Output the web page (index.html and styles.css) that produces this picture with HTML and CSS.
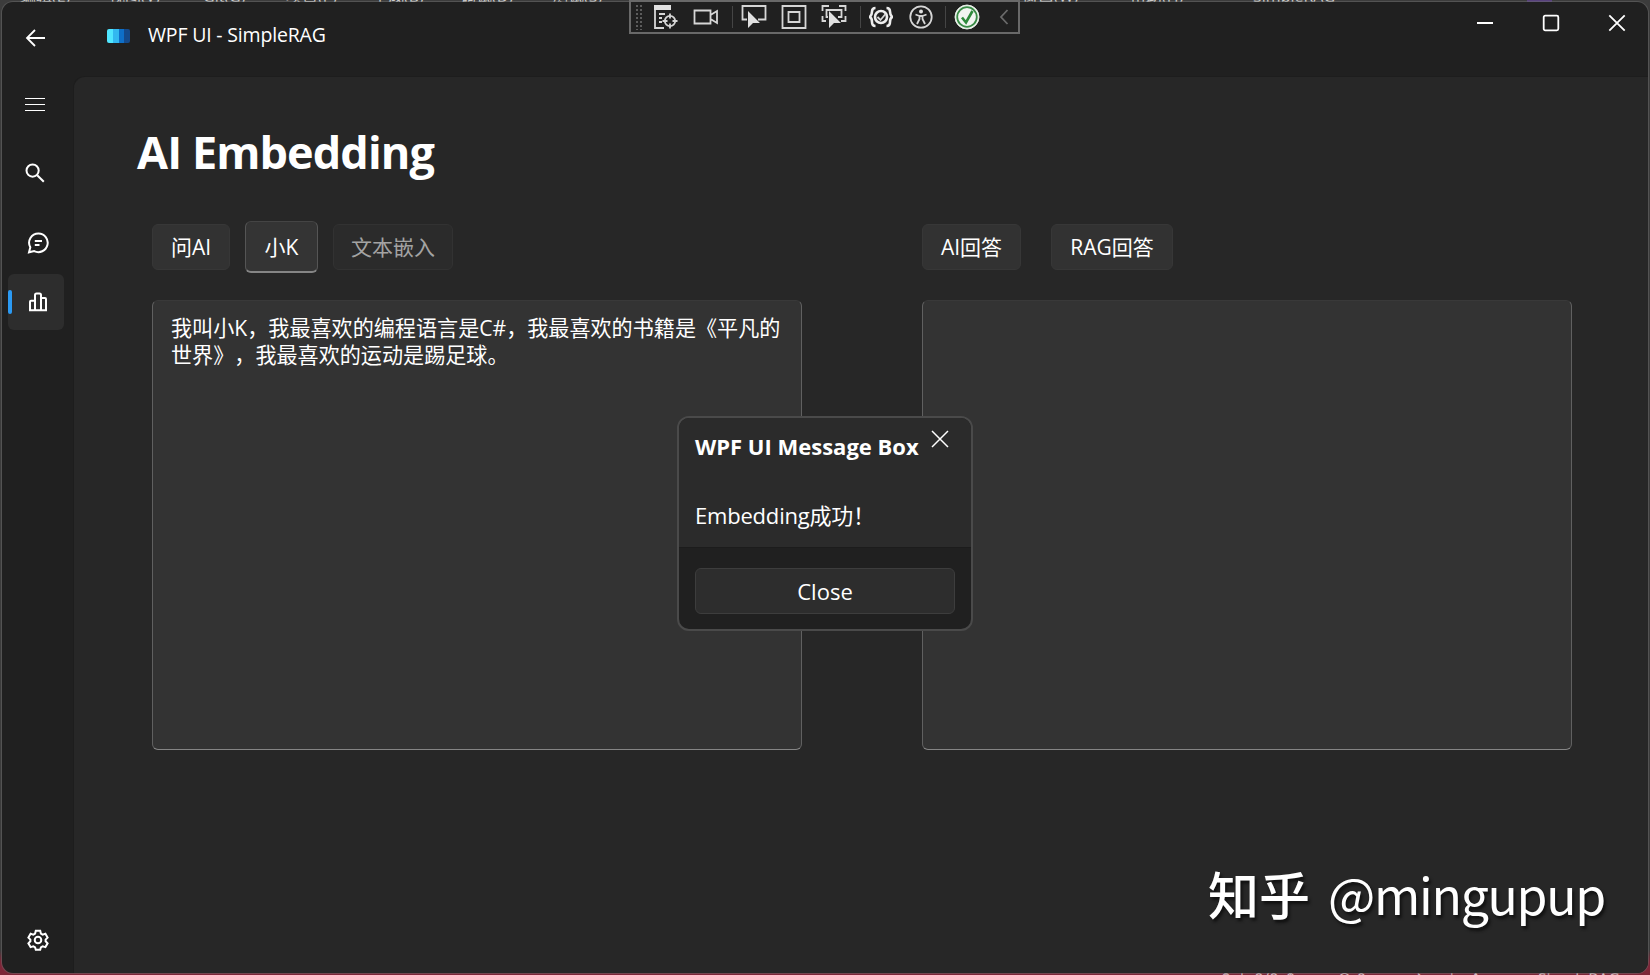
FILE: index.html
```html
<!DOCTYPE html>
<html lang="zh-CN">
<head>
  <meta charset="utf-8">
  <title>WPF UI - SimpleRAG</title>
  <link rel="stylesheet" href="styles.css">
</head>
<body>
  <!-- Menu bar of the window behind -->
  <div class="back-menu">
    <span class="m1">编辑(E)</span>
    <span class="m2">视图(V)</span>
    <span class="m3">Git(G)</span>
    <span class="m4">项目(P)</span>
    <span class="m5">生成(B)</span>
    <span class="m6">调试(D)</span>
    <span class="m7">测试(S)</span>
    <span class="m8">窗口(W)</span>
    <span class="m9">帮助(H)</span>
    <span class="m10">SimpleRAG</span>
    <i class="purple"></i>
  </div>
  <div class="back-status">
    <span>↑↓ 0/0 ↑</span><span>⊘ 0</span><span>⎇ main ▲</span><span>◈ SimpleRAG</span>
  </div>

  <div class="window">
    <header class="titlebar">
      <svg class="back" width="22" height="20" viewBox="0 0 22 20"><path d="M20 10H2M10 2L2 10l8 8"/></svg>
      <div class="app-icon"><i></i><i></i><i></i><i></i></div>
      <span class="app-title">WPF UI - SimpleRAG</span>
      <div class="window-buttons">
        <svg width="18" height="18" viewBox="0 0 18 18"><path d="M1 9h16"/></svg>
        <svg width="18" height="18" viewBox="0 0 18 18"><rect x="1.7" y="1.7" width="14.6" height="14.6" rx="1.5"/></svg>
        <svg width="18" height="18" viewBox="0 0 18 18"><path d="M1.3 1.3l15.4 15.4M16.7 1.3L1.3 16.7"/></svg>
      </div>
    </header>

    <div class="main">
      <nav class="sidebar">
        <div class="nav-menu"><svg width="20" height="16" viewBox="0 0 20 16"><path d="M0 2.500h20M0 8.500h20M0 14.500h20"/></svg></div>
        <div class="nav-search"><svg width="20" height="20" viewBox="0 0 20 20"><circle cx="7.600" cy="7.600" r="6.100"/><path d="M12.200 12.200l6.600 6.600"/></svg></div>
        <div class="nav-item chat"><svg width="22" height="22" viewBox="0 0 22 22"><path d="M11.500 1.500a9.300 9.300 0 1 1-4.300 17.600L2 20.300l1.300-5A9.300 9.300 0 0 1 11.500 1.500zM7.800 9h7.200M7.800 13h4.700"/></svg></div>
        <div class="nav-item active"><svg width="20" height="20" viewBox="0 0 20 20"><path d="M2 18.200V9.800q0-1 1-1h4V3q0-1.500 1.500-1.500h3Q13 1.500 13 3v15.200M13 6h4q1 0 1 1v11.200M7 8.800v9.400M1 18.200h18"/></svg></div>
        <div class="nav-item settings"><svg width="22" height="22" viewBox="0 0 22 22"><circle cx="11" cy="11" r="3.300"/><path d="M8.800 1.800h4.400l.7 2.800 1.700 1 2.800-.8 2.200 3.800-2 2v1.700l2 2-2.200 3.800-2.800-.8-1.700 1-.7 2.500H8.800l-.7-2.500-1.700-1-2.800.8-2.200-3.800 2-2v-1.700l-2-2 2.200-3.800 2.800.8 1.700-1z"/></svg></div>
      </nav>

      <div class="content">
        <h1>AI Embedding</h1>
        <div class="columns">
          <section class="column">
            <div class="toolbar">
              <button class="btn ask">问AI</button>
              <div class="input-k">小K</div>
              <button class="btn embed" disabled>文本嵌入</button>
            </div>
            <div class="textbox">我叫小K，我最喜欢的编程语言是C#，我最喜欢的书籍是《平凡的<br>世界》，我最喜欢的运动是踢足球。</div>
          </section>
          <section class="column">
            <div class="toolbar right">
              <button class="btn ai">AI回答</button>
              <button class="btn rag">RAG回答</button>
            </div>
            <div class="textbox"></div>
          </section>
        </div>
      </div>
    </div>
  </div>

  <!-- Debug toolbar -->
  <div class="debug-bar">
    <i class="grip"></i>
    <svg class="d1" width="24" height="26" viewBox="0 0 24 26"><path class="fill" d="M0 1h17v5H0z"/><path d="M1 6v18h9M5 10h6M5 14h3M5 18h3"/><circle cx="16" cy="17" r="5.200"/><path d="M16 9.500v5M16 19.500v5M8.500 17h5M18.500 17h5"/></svg>
    <svg class="d2" width="26" height="26" viewBox="0 0 26 26"><path d="M1.500 6.500h16v13h-16zM17.500 11l6.500-4v12l-6.500-4"/></svg>
    <i class="sep"></i>
    <svg class="d3" width="26" height="26" viewBox="0 0 26 26"><path d="M6 15.500H1.500V2h23v13.500H17"/><path class="fill" d="M7 7l12 12h-7l-5 5z"/></svg>
    <svg class="d4" width="26" height="26" viewBox="0 0 26 26"><path d="M1.500 2h23v22h-23zM7.500 8h11v10h-11z"/></svg>
    <svg class="d5" width="26" height="26" viewBox="0 0 26 26"><path d="M1.500 7V2H8M18 2h6.500v5M24.500 12v5H20M1.500 12v5H5M7 13H5.500V6h15v7H17"/><path class="fill" d="M8 7l12 12h-7l-5 5z"/></svg>
    <i class="sep"></i>
    <svg class="d6" width="24" height="26" viewBox="0 0 24 26"><path class="bold" d="M6.500 4Q3 4 3 7.500T.8 13Q3 14 3 18t3.500 4M17.500 4Q21 4 21 7.500t2.200 5.500Q21 14 21 18t-3.500 4"/><circle class="bold" cx="12" cy="13" r="6"/><path d="M8.500 13l3 3 5-6"/></svg>
    <svg class="d7" width="26" height="26" viewBox="0 0 26 26"><circle cx="13" cy="13" r="10.700"/><circle class="fill" cx="13" cy="7.500" r="2"/><path d="M7.500 10.500l4 1.500v3l-2.500 5M18.500 10.500l-4 1.500v3l2.500 5M11.500 12h3"/></svg>
    <i class="sep"></i>
    <svg class="d8" width="26" height="26" viewBox="0 0 26 26"><circle class="ok-outer" cx="13" cy="13" r="12"/><circle class="ok-ring" cx="13" cy="13" r="9.800"/><path class="ok-check" d="M8 13.500l4 5 6.500-11.500"/></svg>
    <svg class="d9" width="10" height="18" viewBox="0 0 10 18"><path d="M8.500 2L2 9l6.500 7"/></svg>
  </div>

  <!-- Message box -->
  <div class="message-box">
    <div class="message-body">
      <div class="message-head">
        <span class="message-title">WPF UI Message Box</span>
        <svg width="18" height="18" viewBox="0 0 18 18"><path d="M1 1l16 16M17 1L1 17"/></svg>
      </div>
      <p>Embedding成功！</p>
    </div>
    <div class="message-footer"><button>Close</button></div>
  </div>

  <div class="watermark"><b>知乎</b><span>@mingupup</span></div>
</body>
</html>
```
FILE: styles.css
```css
* {
  box-sizing: border-box;
}
body {
  position: relative;
  margin: 0;
  width: 1650px;
  height: 975px;
  padding: 2px;
  overflow: hidden;
  background: linear-gradient(#3c3c3c 0, #3c3c3c 950px, #7d2638 962px);
  color: #fff;
  font-family: "Open Sans", "Noto Sans CJK SC", sans-serif;
}
svg {
  display: block;
  flex: none;
  fill: none;
  stroke: #fff;
  stroke-width: 1.8;
}
button {
  font: inherit;
  color: inherit;
  padding: 0;
}
/* Window behind, only its edges are visible */
.back-menu {
  position: absolute;
  left: 0;
  top: 0;
  width: 1650px;
  height: 2px;
  overflow: hidden;
  font-size: 16px;
  line-height: 20px;
  color: #ccc;
}
.back-menu span,
.back-menu i {
  position: absolute;
  top: -14px;
}
.m1 { left: 20px; }
.m2 { left: 109px; }
.m3 { left: 203px; }
.m4 { left: 286px; }
.m5 { left: 372px; }
.m6 { left: 460px; }
.m7 { left: 552px; }
.m8 { left: 1022px; }
.m9 { left: 1130px; }
.m10 { left: 1253px; }
.back-menu .purple {
  left: 1527px;
  top: 0;
  width: 25px;
  height: 2px;
  background: #57417c;
}
.back-status {
  position: absolute;
  left: 1218px;
  top: 973px;
  width: 432px;
  height: 2px;
  overflow: hidden;
  display: flex;
  gap: 38px;
  font-size: 16px;
  line-height: 12px;
  color: #d8b8be;
  white-space: nowrap;
}
.window {
  position: relative;
  width: 1646px;
  height: 971px;
  border-radius: 11px;
  background: #202020;
  box-shadow: 0 0 0 1px rgba(110, 110, 110, 0.45);
  overflow: hidden;
  display: flex;
  flex-direction: column;
}
.titlebar {
  height: 74px;
  flex: none;
  display: flex;
  align-items: flex-start;
  padding-left: 23px;
}
.back {
  margin-top: 26px;
}
.app-icon {
  display: flex;
  width: 23px;
  height: 14px;
  margin: 27px 0 0 60px;
  border-radius: 2px;
  overflow: hidden;
}
.app-icon i {
  flex: 1;
  background: #50e6ff;
}
.app-icon i:nth-child(2) { background: #32b8f0; }
.app-icon i:nth-child(3) { background: #0e6fc8; }
.app-icon i:nth-child(4) { background: #144a8c; }
.app-title {
  margin: 19px 0 0 18px;
  font-size: 19.5px;
  line-height: 27px;
  letter-spacing: -0.18px;
}
.window-buttons {
  display: flex;
  gap: 48px;
  margin: 12px 22px 0 auto;
}
.main {
  flex: 1;
  display: flex;
}
.sidebar {
  width: 71px;
  display: flex;
  flex-direction: column;
  padding: 0 9px 5px 6px;
}
.sidebar > div {
  display: flex;
  align-items: center;
}
.nav-menu {
  height: 56px;
  padding-left: 17px;
}
.nav-menu svg {
  stroke-width: 1.2;
}
.nav-search {
  height: 82px;
  padding-left: 17px;
}
.nav-search svg {
  stroke-width: 2;
}
.nav-item {
  width: 56px;
  height: 56px;
  justify-content: center;
  padding-left: 4px;
  border-radius: 6px;
}
.nav-item svg {
  stroke-width: 2;
}
.chat {
  height: 60px;
  padding-bottom: 3px;
}
.active {
  position: relative;
  background: #2d2d2d;
}
.active::before {
  content: "";
  position: absolute;
  left: 0;
  top: 16px;
  width: 4px;
  height: 24px;
  border-radius: 2px;
  background: #2b9af3;
}
.settings {
  margin-top: auto;
}
.content {
  flex: 1;
  background: #272727;
  border-radius: 12px 0 0 0;
  border-left: 1px solid #1d1d1d;
  border-top: 1px solid #1d1d1d;
  padding: 45px 0 0 63px;
}
h1 {
  margin: 0 0 42px;
  font-size: 45px;
  line-height: 60px;
  font-weight: 700;
  letter-spacing: -0.9px;
}
.columns {
  display: flex;
  gap: 120px;
  padding-left: 15px;
}
.column {
  width: 650px;
}
.toolbar {
  display: flex;
  align-items: center;
  gap: 15px;
  height: 46px;
  margin-bottom: 30px;
  font-size: 21px;
}
.toolbar.right {
  gap: 30px;
}
.btn {
  height: 46px;
  border: 1px solid #373737;
  border-radius: 6px;
  background: #323232;
  line-height: 41px;
  white-space: nowrap;
}
.ask { width: 78px; }
.embed {
  width: 120px;
  color: #a3a3a3;
  background: #2b2b2b;
  border-color: #323232;
}
.ai { width: 99px; }
.rag { width: 122px; }
.input-k {
  width: 73px;
  height: 52px;
  flex: none;
  border: 1px solid #555;
  border-top-color: #444;
  border-bottom: 2px solid #858585;
  border-radius: 6px;
  background: #343434;
  text-align: center;
  line-height: 51px;
}
.textbox {
  height: 450px;
  border: 1px solid #606060;
  border-top-color: #393939;
  border-bottom-color: #858585;
  border-radius: 6px;
  background: #333;
  padding: 13px 0 0 18px;
  font-size: 21.1px;
  line-height: 27px;
  white-space: nowrap;
  text-spacing-trim: space-all;
}
.debug-bar {
  position: absolute;
  left: 629px;
  top: 0;
  width: 391px;
  height: 34px;
  border: 2px solid #696969;
  background: #202020;
  display: flex;
  align-items: center;
  padding-left: 4px;
}
.debug-bar svg {
  stroke: #d6d6d6;
  stroke-width: 1.8;
}
.debug-bar .fill {
  fill: #e0e0e0;
  stroke: none;
}
.debug-bar .bold {
  stroke: #eee;
  stroke-width: 2.6;
}
.grip {
  width: 9px;
  height: 26px;
  background: radial-gradient(circle, #5c5c5c 1px, transparent 1.3px) 0 0 / 4px 4px;
}
.sep {
  width: 1px;
  height: 22px;
  background: #454545;
}
.d1 { margin-left: 10px; }
.d2 { margin-left: 15px; }
.d2 + .sep { margin: 0 8px 0 13px; }
.d4 { margin-left: 14px; }
.d5 { margin-left: 14px; }
.d5 + .sep { margin: 0 8px 0 13px; }
.d7 { margin-left: 15px; }
.d7 + .sep { margin: 0 8px 0 11px; }
.debug-bar .ok-outer { fill: #f1f5f1; stroke: #e4eee4; stroke-width: 1; }
.debug-bar .ok-ring { stroke: #388a45; stroke-width: 1.8; }
.debug-bar .ok-check { stroke: #2e8a3c; stroke-width: 2.6; }
.debug-bar .d9 {
  margin-left: 19px;
  stroke: #6a6a6a;
}
.message-box {
  position: absolute;
  left: 677px;
  top: 416px;
  width: 296px;
  height: 215px;
  border: 2px solid #4a4a4a;
  border-radius: 12px;
  background: #202020;
  overflow: hidden;
  font-size: 22px;
}
.message-body {
  height: 130px;
  padding: 14px 22px 0 16px;
  background: #2b2b2b;
  border-bottom: 1px solid #1c1c1c;
}
.message-head {
  display: flex;
  justify-content: space-between;
  height: 69px;
}
.message-title {
  font-weight: 700;
  line-height: 29px;
  white-space: nowrap;
}
.message-head svg {
  margin-top: -2px;
  stroke-width: 1.5;
}
.message-body p {
  margin: 0;
  line-height: 29px;
  letter-spacing: -0.2px;
}
.message-footer {
  padding: 20px 16px;
}
.message-footer button {
  width: 260px;
  height: 46px;
  border: 1px solid #3d3d3d;
  border-radius: 6px;
  background: #2d2d2d;
  line-height: 41px;
}
.watermark {
  position: absolute;
  left: 1208px;
  top: 856px;
  display: flex;
  gap: 18px;
  font-family: "Noto Sans CJK SC", sans-serif;
  font-size: 50px;
  line-height: 74px;
  text-shadow: 2px 3px 3px #111;
  white-space: nowrap;
}
.watermark b {
  font-weight: 500;
  font-size: 51px;
}
.watermark span {
  letter-spacing: -1.3px;
}
```
